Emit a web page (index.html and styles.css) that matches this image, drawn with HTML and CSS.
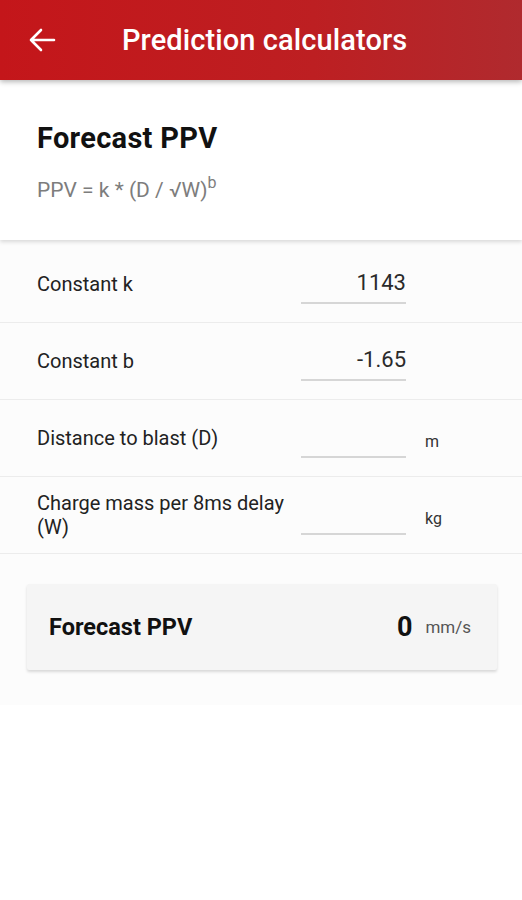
FILE: index.html
```html
<!DOCTYPE html>
<html lang="en">
<head>
    <meta charset="utf-8"/>
    <meta content="width=device-width, initial-scale=1" name="viewport"/>
    <title>Prediction calculators</title>
    <link rel="stylesheet" href="styles.css">
</head>
<body>
    <header class="app-bar">
        <a href="#" class="back">
            <svg width="28" height="26" viewBox="0 0 28 26"><path d="M3 13H26M13 3L3 13L13 23" fill="none" stroke="#fff" stroke-width="2.6" stroke-linecap="round" stroke-linejoin="round"/></svg>
        </a>
        <h1>Prediction calculators</h1>
    </header>
    <section class="intro">
        <h2>Forecast PPV</h2>
        <p class="formula">PPV = k * (D / &radic;W)<sup>b</sup></p>
    </section>
    <main class="content">
        <div class="field first">
            <label>Constant k</label>
            <div class="input">1143</div>
            <span class="unit"></span>
        </div>
        <div class="field">
            <label>Constant b</label>
            <div class="input">-1.65</div>
            <span class="unit"></span>
        </div>
        <div class="field">
            <label>Distance to blast (D)</label>
            <div class="input"></div>
            <span class="unit">m</span>
        </div>
        <div class="field">
            <label>Charge mass per 8ms delay (W)</label>
            <div class="input"></div>
            <span class="unit">kg</span>
        </div>
        <div class="result">
            <span class="result-label">Forecast PPV</span>
            <span class="result-value">0</span>
            <span class="result-unit">mm/s</span>
        </div>
    </main>
</body>
</html>
```

FILE: styles.css
```css
* {
    box-sizing: border-box;
}
body, html {
    margin: 0;
    padding: 0;
    font-family: Roboto, 'Noto Sans', sans-serif;
    background: #fff;
    color: #222;
}
.app-bar {
    position: relative;
    z-index: 3;
    display: flex;
    align-items: center;
    height: 80px;
    padding: 0 0 0 28px;
    background: linear-gradient(90deg, #c4161a 0%, #bd1f22 60%, #b02a2e 100%);
    box-shadow: 0 2px 5px rgba(0, 0, 0, 0.28);
}
.back {
    display: flex;
    width: 28px;
    height: 26px;
}
.app-bar h1 {
    margin: 0 0 0 66px;
    font-size: 29px;
    font-weight: 500;
    color: #fff;
    letter-spacing: 0.1px;
}
.intro {
    position: relative;
    z-index: 2;
    height: 160px;
    padding: 40px 37px 0;
    background: #fff;
    box-shadow: 0 2px 4px rgba(0, 0, 0, 0.14);
}
.intro h2 {
    margin: 0;
    font-size: 29px;
    font-weight: 700;
    color: #111;
    line-height: 36px;
    letter-spacing: 0.3px;
}
.formula {
    margin: 22px 0 0;
    font-size: 21px;
    color: #7d7d7d;
}
.formula sup {
    font-size: 16px;
    vertical-align: 9px;
    line-height: 0;
}
.content {
    background: #fcfcfc;
    padding-bottom: 35px;
}
.field {
    display: flex;
    align-items: center;
    height: 77px;
    padding-left: 37px;
    border-bottom: 1px solid #ececec;
}
.field.first {
    height: 83px;
    padding-top: 6px;
}
.field label {
    flex: 1;
    font-size: 20px;
    line-height: 24px;
    color: #222;
    padding-right: 8px;
}
.input {
    width: 105px;
    height: 36px;
    margin-top: 4px;
    border-bottom: 2px solid #d6d6d6;
    text-align: right;
    font-size: 22px;
    line-height: 30px;
    color: #2a2a2a;
}
.unit {
    width: 116px;
    padding-left: 19px;
    font-size: 16px;
    color: #333;
    margin-top: 6px;
}
.result {
    display: flex;
    align-items: center;
    height: 86px;
    margin: 30px 25px 0 27px;
    padding: 0 26px 0 22px;
    background: #f5f5f5;
    box-shadow: 0 2px 3px rgba(0, 0, 0, 0.14);
    border-radius: 2px;
}
.result-label {
    flex: 1;
    font-size: 23.5px;
    font-weight: 700;
    color: #111;
}
.result-value {
    font-size: 27px;
    font-weight: 700;
    color: #111;
}
.result-unit {
    margin-left: 13px;
    font-size: 17px;
    color: #555;
}
```
